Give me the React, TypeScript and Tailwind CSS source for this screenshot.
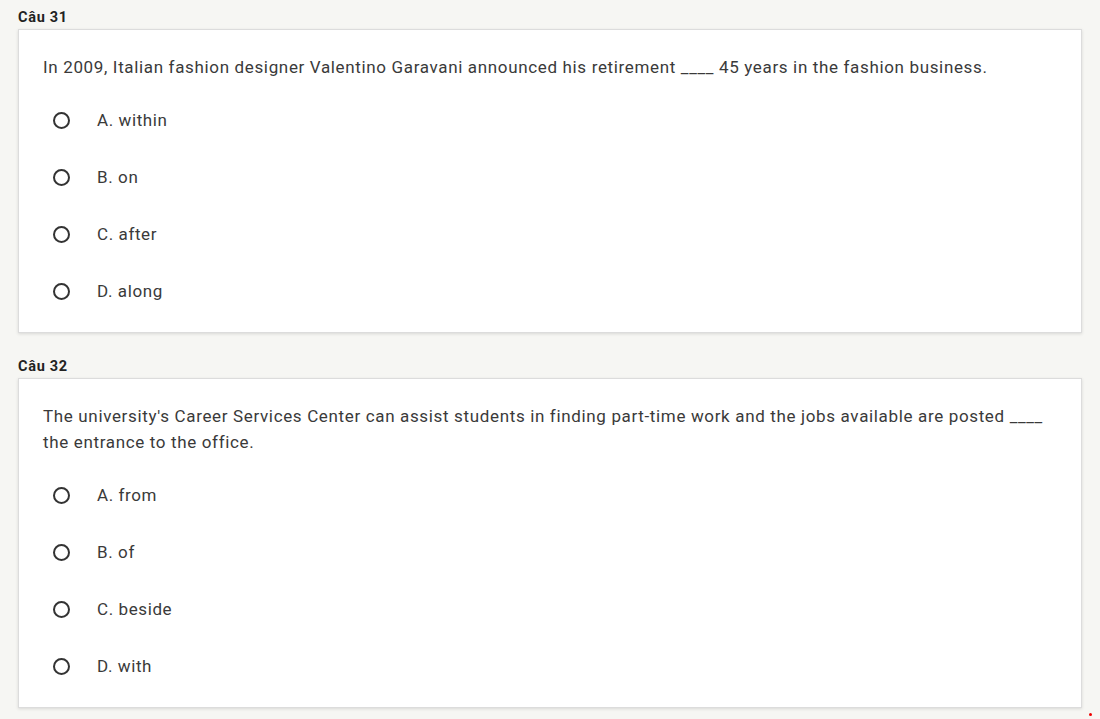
import React from "react";

type Q = { label: string; text: string; options: string[] };

const questions: Q[] = [
  {
    label: "Câu 31",
    text: "In 2009, Italian fashion designer Valentino Garavani announced his retirement ____ 45 years in the fashion business.",
    options: ["A. within", "B. on", "C. after", "D. along"],
  },
  {
    label: "Câu 32",
    text: "The university's Career Services Center can assist students in finding part-time work and the jobs available are posted ____ the entrance to the office.",
    options: ["A. from", "B. of", "C. beside", "D. with"],
  },
];

function Question({ q }: { q: Q }) {
  return (
    <div className="mb-[24px]">
      <div className="text-[14.5px] leading-[20px] font-bold text-[#222] pl-[18px] tracking-[0.7px]">{q.label}</div>
      <div className="mx-[18px] mt-[1px] bg-white border border-[#dcdcdc] shadow-[0_1px_3px_rgba(0,0,0,0.12)] px-[24px] pt-[24px] pb-[12px]">
        <div className="text-[17px] leading-[26px] text-[#3a3a3a] tracking-[0.65px]">{q.text}</div>
        <div className="mt-[12px]">
          {q.options.map((o) => (
            <div key={o} className="h-[57px] flex items-center">
              <span className="ml-[10px] w-[17px] h-[17px] rounded-full border-2 border-[#333] box-border" />
              <span className="ml-[27px] text-[17px] text-[#3a3a3a] tracking-[0.6px]">{o}</span>
            </div>
          ))}
        </div>
      </div>
    </div>
  );
}

export default function App() {
  return (
    <div
      className="relative w-[1100px] h-[719px] overflow-hidden bg-[#f6f6f3] pt-[8px]"
      style={{ fontFamily: "Roboto, 'Liberation Sans', sans-serif" }}
    >
      {questions.map((q) => (
        <Question key={q.label} q={q} />
      ))}
      <span className="absolute left-[1089px] top-[713px] w-[3px] h-[3px] rounded-full bg-[#e00]" />
    </div>
  );
}
